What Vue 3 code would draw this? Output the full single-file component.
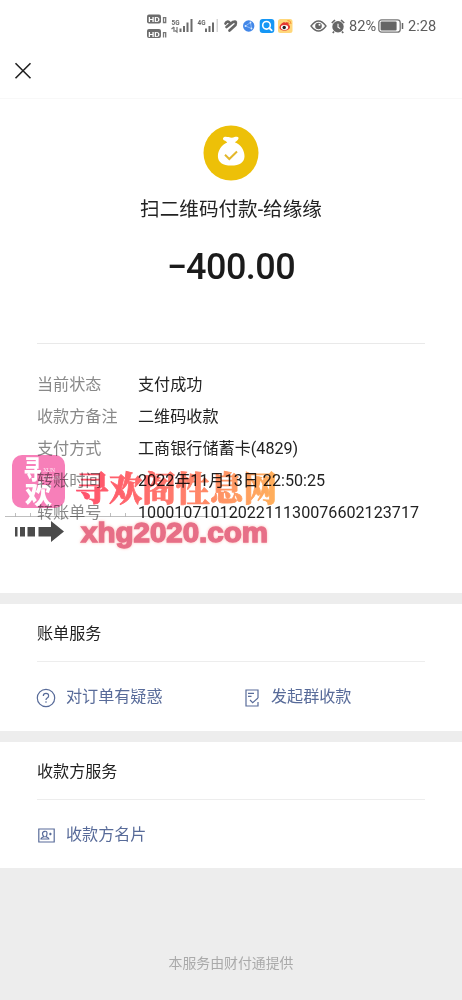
<script setup>
const details = [
  ['当前状态', '支付成功'],
  ['收款方备注', '二维码收款'],
  ['支付方式', '工商银行储蓄卡(4829)'],
  ['转账时间', '2022年11月13日 22:50:25'],
  ['转账单号', '1000107101202211130076602123717'],
]
</script>

<template>
  <div class="page">
    <header class="status">
      <svg class="signals" width="148" height="30" viewBox="146 11 148 30">
        <g fill="#6c6c6c">
          <rect x="147" y="14.5" width="14" height="9" rx="2" />
          <rect x="147" y="29" width="14" height="9" rx="2" />
          <rect x="183" y="26" width="2" height="6" />
          <rect x="179.500" y="28.500" width="2" height="3.500" />
          <rect x="186.500" y="22.500" width="2" height="9.500" />
          <rect x="190.500" y="19" width="2" height="13" />
          <rect x="205" y="28.500" width="2" height="3.500" />
          <rect x="208.500" y="26" width="2" height="6" />
          <rect x="212" y="22.500" width="2" height="9.500" />
          <rect x="216.500" y="19" width="1.500" height="13" fill="#d4d4d4" />
        </g>
        <g class="hd" fill="#fff"><text x="148.300" y="22" textLength="11.500" lengthAdjust="spacingAndGlyphs">HD</text><text x="148.300" y="36.500" textLength="11.500" lengthAdjust="spacingAndGlyphs">HD</text></g>
        <g fill="none" stroke="#777" stroke-width="1.300">
          <path d="M163.500 22.500v-4.800h2.200v4.800zM163.500 37.500v-4.800h2.200v4.800" />
          <path d="M174 27v5M171.500 29l2.500-2M177 27v5l-2-1.500" stroke-width="1.200" />
        </g>
        <g class="net"><text x="171.500" y="24.800" textLength="8" lengthAdjust="spacingAndGlyphs">5G</text><text x="197.500" y="24.800" textLength="8" lengthAdjust="spacingAndGlyphs">4G</text></g>
        <g fill="none" stroke="#666" stroke-width="2.700" stroke-linecap="round">
          <path d="M225.500 23.500q1.500-3 4-1M226.500 27l6.500-5q3.500-1.500 2.800 1.700M229.500 30.500l6-5.500" />
        </g>
        <circle cx="248.700" cy="26" r="5.700" fill="#4287e8" />
        <g fill="none" stroke="#acd1ff" stroke-width=".7"><path d="M245.500 26l5-3.500 1 6z" /></g>
        <g fill="#dcecff"><circle cx="245.500" cy="26" r=".9" /><circle cx="250.500" cy="22.500" r=".9" /><circle cx="251.500" cy="28.500" r=".9" /></g>
        <rect x="259.700" y="19" width="14.600" height="14" rx="3" fill="#1597f5" />
        <circle cx="266.500" cy="25.300" r="3.800" fill="none" stroke="#fff" stroke-width="1.600" />
        <path d="M269.200 28l2.500 2.300" stroke="#fff" stroke-width="1.800" stroke-linecap="round" />
        <rect x="278" y="19" width="14.500" height="14" rx="2.500" fill="#ffd77a" />
        <path d="M279.500 27c.5-3 4.500-6 5.700-4.300 2.700-1.200 4 0 3.400 1.700 3.200 2.200.8 6.200-4.200 6.200-3.300 0-5.200-1.500-4.900-3.600z" fill="#e43832" />
        <ellipse cx="284.500" cy="27.500" rx="3.600" ry="2.400" fill="#fff" /><circle cx="284.200" cy="27.500" r="1.700" fill="#222" />
        <path d="M287.500 20.500q3.700-.2 3.500 3.500M287.500 22.500q1.800 0 1.700 1.700" fill="none" stroke="#f79335" />
      </svg>
      <svg class="eye" width="17" height="14" viewBox="0 0 17 14">
        <path d="M1 7q7.500-10 15 0-7.500 10-15 0z" fill="none" stroke="#666" stroke-width="1.300" /><circle cx="8.500" cy="7" r="3.300" fill="#666" /><circle cx="9.500" cy="5.800" r="1" fill="#fff" />
      </svg>
      <svg class="alarm" width="14" height="15" viewBox="0 0 14 15">
        <circle cx="7" cy="7.800" r="5.700" fill="#666" /><path d="M.8 4L4 1M13.200 4L10 1M3 12.500l-1.200 1.500M11 12.500l1.200 1.500" stroke="#666" stroke-width="1.700" /><path d="M7 4.800v3.300l2.200 1.500" fill="none" stroke="#fff" stroke-width="1.100" />
      </svg>
      <span class="percent">82%</span>
      <svg class="battery" width="26" height="14" viewBox="0 0 26 14">
        <rect x=".8" y=".8" width="21.400" height="12.400" rx="2.800" fill="none" stroke="#777" stroke-width="1.300" /><rect x="2.600" y="2.600" width="16" height="8.800" rx="1" fill="#666" /><path d="M24.500 4v6" stroke="#666" stroke-width="1.500" />
      </svg>
      <span class="clock">2:28</span>
    </header>
    <nav class="nav">
      <svg width="18" height="18" viewBox="0 0 18 18"><path d="M1.500 1.200l15 15M16.500 1.200l-15 15" stroke="#222" stroke-width="1.600" /></svg>
    </nav>

    <main class="receipt">
      <svg class="coin" width="56" height="56" viewBox="0 0 56 56">
        <circle cx="28" cy="28" r="27.500" fill="#edc008" />
        <path d="M20 13.500c.2-2.300 3.500-2 5.500-1.400 2.500.7 4.300.7 6 0 1.700-.6 3.700-.2 4 .7.500 1.400-1.500 3.200-3.700 4.500 6 2 9.700 8.200 9.700 14 0 6-4.800 9.300-13.300 9.300s-13.300-3.300-13.300-9.300c0-5.800 3.700-11.500 9.300-13.700-1-1.200-1.700-1.700-2.700-2.100-.9-.4-1.600-.9-1.500-2z" fill="#fff" />
        <path d="M22 29.800l4.300 4.200 7.700-7.500" fill="none" stroke="#e3b72b" stroke-width="2" />
      </svg>
      <h1>扫二维码付款-给缘缘</h1>
      <div class="amount"><span class="minus">−</span>400.00</div>
      <dl class="details">
        <div v-for="[label, value] in details" :key="label" class="row">
          <dt>{{ label }}</dt><dd>{{ value }}</dd>
        </div>
      </dl>
      <svg class="watermark" width="290" height="104" viewBox="0 450 290 104">
        <defs>
          <linearGradient id="wm" x1="76" x2="277" y1="0" y2="0" gradientUnits="userSpaceOnUse"><stop offset="0" stop-color="#ff4160" /><stop offset=".5" stop-color="#ff7060" /><stop offset="1" stop-color="#ffaa4e" /></linearGradient>
        </defs>
        <rect x="12" y="455" width="53" height="53" rx="10" fill="#f77fb9" />
        <g class="badge" fill="#fff"><text x="23.500" y="479" textLength="18" lengthAdjust="spacingAndGlyphs">寻</text><text x="25" y="503.500" textLength="27" lengthAdjust="spacingAndGlyphs">欢</text></g>
        <g class="latin" fill="#fff" opacity=".8"><text x="43" y="472" textLength="12">XUN</text><text x="43" y="480" textLength="17">HUAN</text></g>
        <path d="M5 516.500h237M15.500 513v3.500M30.500 513v3.500M45.500 513v3.500M110.500 513v3.500M125.500 513v3.500" stroke="#999" stroke-width=".8" fill="none" opacity=".8" />
        <path d="M15 527h2.500v9.500H15zM20 527h5v9.500h-5zM27.500 527H35v9.500h-7.500zM38.500 527H51v-6l13 10.500L51 542v-5.500H38.500z" fill="#4b4b4b" />
        <text class="brand" x="75" y="500.500" textLength="202" fill="url(#wm)" stroke="url(#wm)">寻欢阁性息网</text>
        <text class="site" x="81" y="541.500" textLength="187" lengthAdjust="spacingAndGlyphs">xhg2020.com</text>
      </svg>
    </main>

    <section class="card bill">
      <h2>账单服务</h2>
      <div class="links">
        <a class="question"><svg width="20" height="20" viewBox="0 0 20 20"><circle cx="10" cy="10" r="8.700" /><path d="M7.300 8q0-2.700 2.700-2.700T12.600 8q0 1.200-1.400 2.100T10 12M10 13.300v1.500" /></svg>对订单有疑惑</a>
        <a class="group"><svg width="14" height="18" viewBox="0 0 14 18"><path d="M13 9V1H1v16h12v-4M3 4.300h6M3 7.300h3.500M5 11l2.700 2.700L13 9" /></svg>发起群收款</a>
      </div>
    </section>
    <section class="card payee">
      <h2>收款方服务</h2>
      <div class="links"><a class="namecard"><svg width="17" height="15" viewBox="0 0 17 15"><path d="M.8 1h15.400v13H.8zM3 11q0-1.300 3-2.200Q4.500 7.500 4.500 5.600T6.800 3.300 9 5.600 7.800 8.800q3 .9 3 2.200zM11 6h2.800M12.400 4.800v2.500" /></svg>收款方名片</a></div>
    </section>
    <footer>本服务由财付通提供</footer>
  </div>
</template>

<style>
body { margin: 0; background: #ededed; }
</style>
<style scoped>
.page { width: 462px; height: 1000px; overflow: hidden; background: #ededed; font-family: Roboto, "Noto Sans CJK SC", sans-serif; color: #222; display: flex; flex-direction: column; }
.status { height: 52px; background: #fff; box-sizing: border-box; padding-left: 146px; display: flex; align-items: center; flex: none; }
.status svg { flex: none; }
.signals { display: block; }
.hd { font: 700 8px Roboto, sans-serif; }
.net { font: 700 8px Roboto, sans-serif; fill: #666; }
.eye { margin-left: 16px; }
.alarm { margin-left: 4px; }
.percent, .clock { font-size: 14.6px; line-height: 20px; color: #5c5c5c; white-space: nowrap; }
.percent { width: 27px; margin-left: 4px; }
.battery { margin-left: 2px; }
.clock { margin-left: 4px; }
.nav { height: 47px; background: #fff; border-bottom: 1px solid #f8f8f8; box-sizing: border-box; padding: 10px 0 0 14px; flex: none; }
.nav svg { display: block; }
.receipt { position: relative; height: 494px; box-sizing: border-box; background: #fff; padding: 26px 37px 0; display: flex; flex-direction: column; align-items: center; flex: none; }
.coin { flex: none; }
h1 { margin: 14px 0 0; font-size: 19.6px; line-height: 30px; font-weight: 400; white-space: nowrap; }
.amount { margin-top: 21px; font-size: 36px; line-height: 42px; font-weight: 500; letter-spacing: -.5px; white-space: nowrap; color: #1b1b1b; }
.minus { margin-right: -.5px; }
.details { margin: 55px 0 0; padding-top: 25px; width: 388px; border-top: 1px solid #e9e9e9; }
.row { display: flex; height: 32px; line-height: 32px; font-size: 16.1px; letter-spacing: .02px; }
dt { width: 101px; color: #898989; flex: none; }
dd { margin: 0; white-space: nowrap; }
.watermark { position: absolute; left: 0; top: 351px; mix-blend-mode: multiply; }
.badge { font: 900 26px "Noto Sans CJK SC", sans-serif; }
.latin { font: 6px "Liberation Serif", serif; }
.brand { font: 900 33.6px "Noto Serif CJK SC", "Noto Sans CJK SC", serif; stroke-width: .8px; opacity: .92; }
.site { font: 700 28px "Liberation Sans", sans-serif; fill: #e76f87; stroke: #e76f87; stroke-width: 1.4px; filter: drop-shadow(0 0 1.5px #ffbcb6); }
.card { margin-top: 11px; padding: 0 37px; box-sizing: border-box; background: #fff; height: 127px; flex: none; }
.payee { height: 126px; }
h2 { margin: 0; height: 58px; box-sizing: border-box; padding-top: 1px; border-bottom: 1px solid #ededed; font-size: 16.1px; line-height: 58px; font-weight: 400; }
.links { height: 69px; display: flex; align-items: center; }
.links a { display: flex; align-items: center; color: #586b99; font-size: 16.1px; line-height: 24px; white-space: nowrap; }
.links svg { fill: none; stroke: #586b99; stroke-width: 1.2; position: relative; top: 1px; flex: none; }
.question { width: 208px; }
.question svg { margin: 0 10px 0 -1px; }
.group svg { margin-right: 12px; }
.namecard svg { margin: 0 11px 0 1px; }
footer { margin-top: 84px; height: 22px; line-height: 22px; font-size: 13.9px; color: #aaa; text-align: center; }
</style>
